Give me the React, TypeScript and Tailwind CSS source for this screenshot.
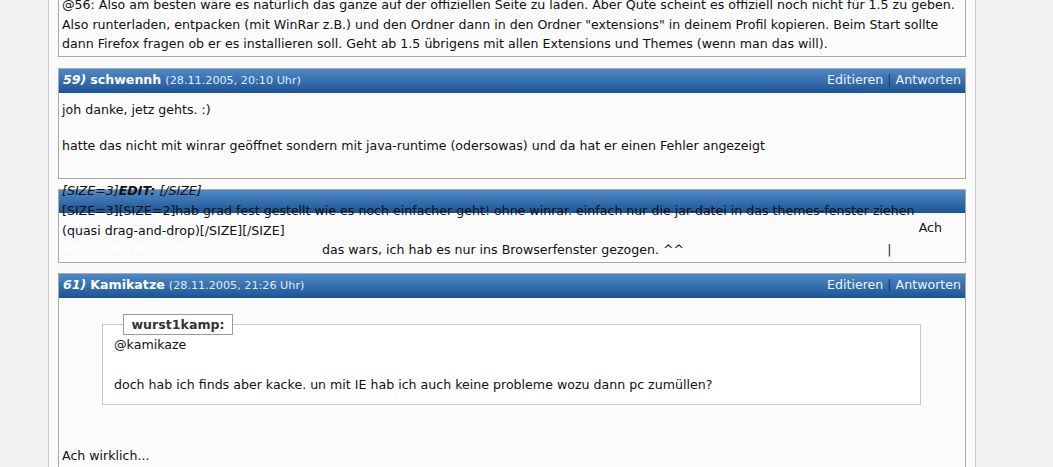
const font = "font-['DejaVu_Sans','Liberation_Sans',sans-serif]"

function PostHeader({ num, name, date }: { num: string; name: string; date: string }) {
  return (
    <div className="flex h-[24px] items-center justify-between bg-gradient-to-b from-[#5089c8] to-[#1b5595] px-[4px] text-white">
      <div className="whitespace-nowrap">
        <span className="font-bold italic">{num}</span> <span className="font-bold">{name}</span>{' '}
        <span className="text-[11.2px] text-[#e3ebf6]">{date}</span>
      </div>
      <div className="whitespace-nowrap text-[#eef3fa]">
        Editieren <span className="text-[#163a66]">|</span> Antworten
      </div>
    </div>
  )
}

export default function App() {
  return (
    <div className={`h-[467px] overflow-hidden bg-[#f2f2f2] text-[12.6px] text-[#111] ${font}`}>
      <div className="ml-[48px] flow-root h-full w-[928px] border-x border-[#cdcdcd] bg-[#fafafa] px-[9px]">
        {/* previous post, cut off at the top */}
        <div className="-mt-[10px] border border-[#a9a9a9] bg-[#fbfbfb] px-[3px] pt-[4px] pb-[2px] leading-[19.5px]">
          <div className="whitespace-nowrap">
            @56: Also am besten wäre es natürlich das ganze auf der offiziellen Seite zu laden. Aber Qute scheint es offiziell noch nicht für 1.5 zu geben.
          </div>
          <div className="whitespace-nowrap">
            Also runterladen, entpacken (mit WinRar z.B.) und den Ordner dann in den Ordner "extensions" in deinem Profil kopieren. Beim Start sollte
          </div>
          <div className="whitespace-nowrap">
            dann Firefox fragen ob er es installieren soll. Geht ab 1.5 übrigens mit allen Extensions und Themes (wenn man das will).
          </div>
        </div>

        {/* 59 */}
        <div className="mt-[11px] border border-[#a9a9a9] bg-[#fbfbfb]">
          <PostHeader num="59)" name="schwennh" date="(28.11.2005, 20:10 Uhr)" />
          <div className="h-[85px] px-[3px] pt-[8px] leading-[18px]">
            <div className="h-[18px]">joh danke, jetz gehts. :)</div>
            <div className="h-[18px]" />
            <div className="h-[18px] whitespace-nowrap">
              hatte das nicht mit winrar geöffnet sondern mit java-runtime (odersowas) und da hat er einen Fehler angezeigt
            </div>
            <div className="mt-[26px] leading-[20px]">
              <div className="h-[20px] italic">
                [SIZE=3]<b>EDIT:</b> [/SIZE]
              </div>
              <div className="h-[20px] whitespace-nowrap">
                [SIZE=3][SIZE=2]hab grad fest gestellt wie es noch einfacher geht! ohne winrar. einfach nur die jar-datei in das themes-fenster ziehen
              </div>
              <div className="h-[20px]">(quasi drag-and-drop)[/SIZE][/SIZE]</div>
            </div>
          </div>
        </div>

        {/* 60, header floats pushed into the body */}
        <div className="mt-[10px] border border-[#a9a9a9] bg-[#fbfbfb]">
          <div className="h-[23px] bg-gradient-to-b from-[#5089c8] to-[#1b5595]" />
          <div className="px-[3px] pt-[5px] pb-[2px] leading-[20px]">
            <div className="flex h-[20px] justify-end pr-[20px]">Ach</div>
            <div className="mt-[2px] flex h-[20px] items-center whitespace-nowrap">
              <span className="w-[260px] text-white">
                <span className="font-bold italic">60)</span> <span className="font-bold">JimmyMcmint</span>{' '}
                <span className="text-[11.2px]">(28.11.2005, 20:52 Uhr)</span>
              </span>
              <span>das wars, ich hab es nur ins Browserfenster gezogen. ^^</span>
              <span className="ml-auto pr-[1px] text-white">
                Editieren <span className="text-[#1b1b1b]">|</span> Antworten
              </span>
            </div>
          </div>
        </div>

        {/* 61 */}
        <div className="mt-[10px] border border-[#a9a9a9] bg-[#fbfbfb]">
          <PostHeader num="61)" name="Kamikatze" date="(28.11.2005, 21:26 Uhr)" />
          <div className="px-[3px] pb-[4px] leading-[20px]">
            <fieldset className="mt-[16px] ml-[40px] mr-[41px] border border-[#c8c8c8] bg-white px-[11px] pb-[9px]">
              <legend className="ml-[9px] h-[21px] w-[110px] border border-[#9a9a9a] bg-white text-left">
                <div className="text-center text-[12.6px] leading-[19px] font-bold text-[#333]">wurst1kamp:</div>
              </legend>
              <div className="h-[20px]">@kamikaze</div>
              <div className="h-[20px]" />
              <div className="h-[20px]">doch hab ich finds aber kacke. un mit IE hab ich auch keine probleme wozu dann pc zumüllen?</div>
            </fieldset>
            <div className="mt-[41px] h-[20px]">Ach wirklich...</div>
          </div>
        </div>
      </div>
    </div>
  )
}
